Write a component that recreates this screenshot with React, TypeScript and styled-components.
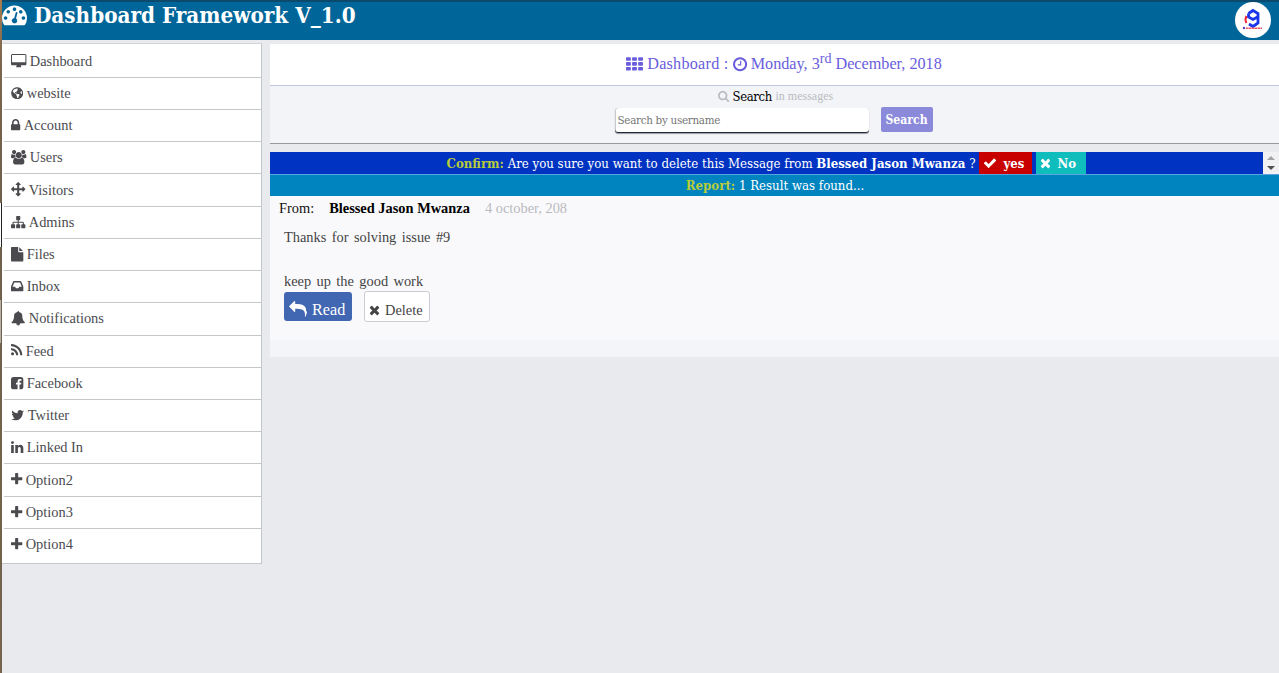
import React from 'react';
import styled, { createGlobalStyle } from 'styled-components';
import { FaGlobeAmericas } from 'react-icons/fa';

const slab = '"DejaVu Serif Condensed", "DejaVu Serif", serif';
const serif = '"Liberation Serif", "Times New Roman", serif';

const GlobalStyle = createGlobalStyle`
  * { box-sizing: border-box; }
  body { margin: 0; background: #e9eaee; font-family: ${serif}; overflow: hidden; }
`;

type Glyph = { x: number; w: number; d: string };

const cell = (x: number, y: number) =>
  `M${x + 512} ${y + 96}v192q0 40-28 68t-68 28h-320q-40 0-68-28t-28-68v-192q0-40 28-68t68-28h320q40 0 68 28t28 68z`;

const glyphs: Record<string, Glyph> = {
  tachometer: { x: 0, w: 1792, d: 'M384 1152q0-53-37.5-90.5t-90.5-37.5-90.5 37.5-37.5 90.5 37.5 90.5 90.5 37.5 90.5-37.5 37.5-90.5zm192-448q0-53-37.5-90.5t-90.5-37.5-90.5 37.5-37.5 90.5 37.5 90.5 90.5 37.5 90.5-37.5 37.5-90.5zm428 481l101-382q6-26-7.5-48.5t-38.5-29.5-48 6.5-30 39.5l-101 382q-60 5-107 43.5t-63 98.5q-20 77 20 146t117 89 146-20 89-117q16-60-6-117t-72-91zm660-33q0-53-37.5-90.5t-90.5-37.5-90.5 37.5-37.5 90.5 37.5 90.5 90.5 37.5 90.5-37.5 37.5-90.5zm-640-640q0-53-37.5-90.5t-90.5-37.5-90.5 37.5-37.5 90.5 37.5 90.5 90.5 37.5 90.5-37.5 37.5-90.5zm448 192q0-53-37.5-90.5t-90.5-37.5-90.5 37.5-37.5 90.5 37.5 90.5 90.5 37.5 90.5-37.5 37.5-90.5zm320 448q0 261-141 483-19 29-54 29h-1402q-35 0-54-29-141-221-141-483 0-182 71-348t191-286 286-191 348-71 348 71 286 191 191 286 71 348z' },
  desktop: { x: -64, w: 1920, d: 'M1728 992v-832q0-13-9.5-22.5t-22.5-9.5h-1600q-13 0-22.5 9.5t-9.5 22.5v832q0 13 9.5 22.5t22.5 9.5h1600q13 0 22.5-9.5t9.5-22.5zm128-832v1088q0 66-47 113t-113 47h-544q0 37 16 77.5t32 71 16 43.5q0 26-19 45t-45 19h-512q-26 0-45-19t-19-45q0-14 16-44t32-70 16-78h-544q-66 0-113-47t-47-113v-1088q0-66 47-113t113-47h1600q66 0 113 47t47 113z' },
  lock: { x: 320, w: 1152, d: 'M640 768h512v-192q0-106-75-181t-181-75-181 75-75 181v192zm832 96v576q0 40-28 68t-68 28h-960q-40 0-68-28t-28-68v-576q0-40 28-68t68-28h32v-192q0-184 132-316t316-132 316 132 132 316v192h32q40 0 68 28t28 68z' },
  users: { x: 0, w: 1920, d: 'M593 896q-162 5-265 128h-134q-82 0-138-40.5t-56-118.5q0-353 124-353 6 0 43.5 21t97.5 42.5 119 21.5q67 0 133-23-5 37-5 66 0 139 81 256zm1071 637q0 120-73 189.5t-194 69.5h-874q-121 0-194-69.5t-73-189.5q0-53 3.5-103.5t14-109 26.5-108.5 43-97.5 62-81 85.5-53.5 111.5-20q10 0 43 21.5t73 48 107 48 135 21.5 135-21.5 107-48 73-48 43-21.5q61 0 111.5 20t85.5 53.5 62 81 43 97.5 26.5 108.5 14 109 3.5 103.5zm-1024-1277q0 106-75 181t-181 75-181-75-75-181 75-181 181-75 181 75 75 181zm704 384q0 159-112.5 271.5t-271.5 112.5-271.5-112.5-112.5-271.5 112.5-271.5 271.5-112.5 271.5 112.5 112.5 271.5zm576 225q0 78-56 118.5t-138 40.5h-134q-103-123-265-128 81-117 81-256 0-29-5-66 66 23 133 23 59 0 119-21.5t97.5-42.5 43.5-21q124 0 124 353zm-128-609q0 106-75 181t-181 75-181-75-75-181 75-181 181-75 181 75 75 181z' },
  arrows: { x: 0, w: 1792, d: 'M1792 896q0 26-19 45l-256 256q-19 19-45 19t-45-19-19-45v-128h-384v384h128q26 0 45 19t19 45-19 45l-256 256q-19 19-45 19t-45-19l-256-256q-19-19-19-45t19-45 45-19h128v-384h-384v128q0 26-19 45t-45 19-45-19l-256-256q-19-19-19-45t19-45l256-256q19-19 45-19t45 19 19 45v128h384v-384h-128q-26 0-45-19t-19-45 19-45l256-256q19-19 45-19t45 19l256 256q19 19 19 45t-19 45-45 19h-128v384h384v-128q0-26 19-45t45-19 45 19l256 256q19 19 19 45z' },
  sitemap: { x: 0, w: 1792, d: 'M1792 1248v320q0 40-28 68t-68 28h-320q-40 0-68-28t-28-68v-320q0-40 28-68t68-28h96v-192h-512v192h96q40 0 68 28t28 68v320q0 40-28 68t-68 28h-320q-40 0-68-28t-28-68v-320q0-40 28-68t68-28h96v-192h-512v192h96q40 0 68 28t28 68v320q0 40-28 68t-68 28h-320q-40 0-68-28t-28-68v-320q0-40 28-68t68-28h96v-192q0-52 38-90t90-38h512v-192h-96q-40 0-68-28t-28-68v-320q0-40 28-68t68-28h320q40 0 68 28t28 68v320q0 40-28 68t-68 28h-96v192h512q52 0 90 38t38 90v192h96q40 0 68 28t28 68z' },
  file: { x: 128, w: 1536, d: 'M1152 512v-472q22 14 36 28l408 408q14 14 28 36h-472zm-128 32q0 40 28 68t68 28h544v1056q0 40-28 68t-68 28h-1344q-40 0-68-28t-28-68v-1600q0-40 28-68t68-28h800v544z' },
  inbox: { x: 128, w: 1536, d: 'M1151 960h316q-1-3-2.5-8t-2.5-8l-212-496h-708l-212 496q-1 2-2.5 8t-2.5 8h316l95 192h320zm513 30v482q0 26-19 45t-45 19h-1408q-26 0-45-19t-19-45v-482q0-62 25-123l238-552q10-25 36.5-42t52.5-17h832q26 0 52.5 17t36.5 42l238 552q25 61 25 123z' },
  bell: { x: 0, w: 1792, d: 'M912 1696q0-16-16-16-59 0-101.5-42.5t-42.5-101.5q0-16-16-16t-16 16q0 73 51.5 124.5t124.5 51.5q16 0 16-16zm816-288q0 52-38 90t-90 38h-448q0 106-75 181t-181 75-181-75-75-181h-448q-52 0-90-38t-38-90q50-42 91-88t85-119.5 74.5-158.5 50-206 19.5-260q0-152 117-282.5t307-158.5q-8-19-8-39 0-40 28-68t68-28 68 28 28 68q0 20-8 39 190 28 307 158.5t117 282.5q0 139 19.5 260t50 206 74.5 158.5 85 119.5 91 88z' },
  rss: { x: 192, w: 1408, d: 'M576 1344q0 80-56 136t-136 56-136-56-56-136 56-136 136-56 136 56 56 136zm512 123q2 28-17 48-18 21-47 21h-135q-25 0-43-16.5t-20-41.5q-22-229-184.5-391.5t-391.5-184.5q-25-2-41.5-20t-16.5-43v-135q0-29 21-47 17-17 43-17h5q160 13 306 80.5t259 181.5q114 113 181.5 259t80.5 306zm512 2q2 27-18 47-18 20-46 20h-143q-26 0-44.5-17.5t-19.5-42.5q-12-215-101-408.5t-231.5-336-336-231.5-408.5-102q-25-1-42.5-19.5t-17.5-43.5v-143q0-28 20-46 18-18 44-18h3q262 13 501.5 120t425.5 294q187 186 294 425.5t120 501.5z' },
  facebook: { x: 128, w: 1536, d: 'M1376 128q119 0 203.5 84.5t84.5 203.5v960q0 119-84.5 203.5t-203.5 84.5h-188v-595h199l30-232h-229v-148q0-56 23.5-84t91.5-28l122-1v-207q-63-9-178-9-136 0-217.5 80t-81.5 226v171h-200v232h200v595h-532q-119 0-203.5-84.5t-84.5-203.5v-960q0-119 84.5-203.5t203.5-84.5h960z' },
  twitter: { x: 64, w: 1664, d: 'M1684 408q-67 98-162 167 1 14 1 42 0 130-38 259.5t-115.5 248.5-184.5 210.5-258 146-323 54.5q-271 0-496-145 35 4 78 4 225 0 401-138-105-2-188-64.5t-114-159.5q33 5 61 5 43 0 85-11-112-23-185.5-111.5t-73.5-205.5v-4q68 38 146 41-66-44-105-115t-39-154q0-88 44-163 121 149 294.5 238.5t371.5 99.5q-8-38-8-74 0-134 94.5-228.5t228.5-94.5q140 0 236 102 109-21 205-78-37 115-142 178 93-10 186-50z' },
  linkedin: { x: 128, w: 1536, d: 'M477 625v991h-330v-991h330zm21-306q1 73-50.5 122t-135.5 49h-2q-82 0-132-49t-50-122q0-74 51.5-122.5t134.5-48.5 133 48.5 51 122.5zm1166 729v568h-329v-530q0-105-40.5-164.5t-126.5-59.5q-63 0-105.5 34.5t-63.5 85.5q-11 30-11 81v553h-329q2-399 2-647t-1-296l-1-48h329v144h-2q20-32 41-56t56.5-52 87-43.5 114.5-15.5q171 0 275 113.5t104 332.5z' },
  plus: { x: 192, w: 1408, d: 'M1600 736v192q0 40-28 68t-68 28h-416v416q0 40-28 68t-68 28h-192q-40 0-68-28t-28-68v-416h-416q-40 0-68-28t-28-68v-192q0-40 28-68t68-28h416v-416q0-40 28-68t68-28h192q40 0 68 28t28 68v416h416q40 0 68 28t28 68z' },
  th: { x: 0, w: 1792, d: [128, 640, 1152].flatMap((y) => [0, 640, 1280].map((x) => cell(x, y))).join('') },
  clock: { x: 128, w: 1536, d: 'M1024 544v448q0 14-9 23t-23 9h-320q-14 0-23-9t-9-23v-64q0-14 9-23t23-9h224v-352q0-14 9-23t23-9h64q14 0 23 9t9 23zm416 352q0-148-73-273t-198-198-273-73-273 73-198 198-73 273 73 273 198 198 273 73 273-73 198-198 73-273zm224 0q0 209-103 385.5t-279.5 279.5-385.5 103-385.5-103-279.5-279.5-103-385.5 103-385.5 279.5-279.5 385.5-103 385.5 103 279.5 279.5 103 385.5z' },
  search: { x: 64, w: 1664, d: 'M1216 832q0-185-131.5-316.5t-316.5-131.5-316.5 131.5-131.5 316.5 131.5 316.5 316.5 131.5 316.5-131.5 131.5-316.5zm512 832q0 52-38 90t-90 38q-54 0-90-38l-343-342q-179 124-399 124-143 0-273.5-55.5t-225-150-150-225-55.5-273.5 55.5-273.5 150-225 225-150 273.5-55.5 273.5 55.5 225 150 150 225 55.5 273.5q0 220-124 399l343 343q37 37 37 90z' },
  check: { x: 0, w: 1792, d: 'M1671 566q0 40-28 68l-724 724-136 136q-28 28-68 28t-68-28l-136-136-362-362q-28-28-28-68t28-68l136-136q28-28 68-28t68 28l294 295 656-657q28-28 68-28t68 28l136 136q28 28 28 68z' },
  times: { x: 192, w: 1408, d: 'M1490 1322q0 40-28 68l-136 136q-28 28-68 28t-68-28l-294-294-294 294q-28 28-68 28t-68-28l-136-136q-28-28-28-68t28-68l294-294-294-294q-28-28-28-68t28-68l136-136q28-28 68-28t68 28l294 294 294-294q28-28 68-28t68 28l136 136q28 28 28 68t-28 68l-294 294 294 294q28 28 28 68z' },
  reply: { x: 0, w: 1792, d: 'M1792 1120q0 166-127 451-3 7-10.5 24t-13.5 30-13 22q-12 17-28 17-15 0-23.5-10t-8.5-25q0-9 2.5-26.5t2.5-23.5q5-68 5-123 0-112-19.5-200.5t-54-153.5-89-112-117-79.5-149.5-49-174-25.5-202-8h-224v256q0 26-19 45t-45 19-45-19l-512-512q-19-19-19-45t19-45l512-512q19-19 45-19t45 19 19 45v256h224q713 0 875 403 53 134 53 333z' },
};

const Svg = styled.svg`
  display: inline-block;
  fill: currentColor;
  flex: none;
  overflow: visible;
`;

const Icon = ({ name, size }: { name: string; size: number }) => {
  if (name === 'globe') return <FaGlobeAmericas size={size * 0.86} />;
  const g = glyphs[name];
  return (
    <Svg width={(size * g.w) / 1792} height={size} viewBox={`${g.x} 0 ${g.w} 1792`}>
      <path d={g.d} />
    </Svg>
  );
};

/* The narrow strip on the left edge shows the desktop behind the window. */
const Page = styled.div`
  height: 673px;
  padding-left: 2px;
  background:
    linear-gradient(#fff, #fff) 0 203px / 1px 44px no-repeat,
    linear-gradient(#222, #222) 1px 203px / 1px 44px no-repeat,
    linear-gradient(#b5b0a8, #b5b0a8) 0 300px / 1px 43px no-repeat,
    linear-gradient(#a87c4e, #7c6650 60px, #6f604c 200px, #75654d) 0 0 / 2px 100% no-repeat;
`;

const Header = styled.header`
  display: flex;
  justify-content: space-between;
  height: 40px;
  border-top: 2px solid #0b4a6c;
  background: #006699;
  color: #fff;
`;

const Title = styled.h1`
  display: flex;
  align-items: flex-start;
  gap: 7px;
  height: 26px;
  margin: 0;
  font: bold 22.25px/26px ${slab};
  white-space: nowrap;
`;

const Avatar = styled.div`
  width: 36px;
  height: 36px;
  margin-right: 8px;
  border-radius: 50%;
  background: #fff;
`;

const Columns = styled.div`
  display: flex;
  align-items: flex-start;
  gap: 8px;
  padding-top: 3px;
`;

const Sidebar = styled.nav`
  width: 260px;
  height: 521px;
  padding: 1.6px 0 0 2px;
  background: #fff;
  border-top: 1px solid #d2d5d8;
  border-right: 1px solid #c3c7cc;
  border-bottom: 1px solid #c3c7cc;
`;

const NavItem = styled.a`
  display: flex;
  align-items: center;
  gap: 3.4px;
  height: 32.22px;
  padding-left: 7px;
  border-bottom: 1px solid #c4c8cb;
  color: #4b4b4f;
  font-size: 14.4px;
  white-space: nowrap;
  svg { margin-bottom: 1px; }
  &:last-child { border-bottom: 0; }
`;

const Main = styled.main`
  flex: 1;
  min-width: 0;
  padding-top: 1px;
`;

const DateBar = styled.div`
  display: flex;
  justify-content: center;
  align-items: center;
  gap: 4px;
  height: 42px;
  padding-left: 19px;
  background: #fff;
  border-bottom: 1px solid #c3c5e4;
  color: #6a5ddc;
  font-size: 16.2px;
  white-space: pre;
  sup { font-size: 14px; line-height: 0; }
`;

const Crumb = styled.span`
  letter-spacing: 0.24px;
`;

const SearchArea = styled.form`
  height: 58px;
  background: #f3f4f7;
  border-bottom: 1px solid #999;
`;

const SearchLabel = styled.div`
  display: flex;
  justify-content: center;
  align-items: center;
  gap: 3.5px;
  height: 20px;
  padding-left: 2px;
  color: #b9bcc0;
  font-size: 12px;
  b { font: 13px ${slab}; letter-spacing: -0.35px; color: #000; }
`;

const SearchRow = styled.div`
  display: flex;
  justify-content: center;
  align-items: flex-start;
  gap: 12px;
  padding: 1px 2px 0 0;
`;

const Field = styled.input`
  width: 254px;
  height: 25px;
  margin-top: 1px;
  padding: 0 2px 1px 3px;
  border: 0;
  border-radius: 3px;
  background: #fff;
  box-shadow: inset 0 -1px 0 #222a38, 0 1px 1px #9a9da5, inset 1px 0 0 #c8cad0;
  font: 11.5px ${slab};
  letter-spacing: -0.28px;
  &::placeholder { color: #757575; opacity: 1; }
`;

const SearchButton = styled.button`
  width: 52px;
  height: 25px;
  padding: 0;
  border: 0;
  border-radius: 2px;
  background: #8b89da;
  color: #fff;
  font: bold 12.1px ${slab};
`;

const ConfirmRow = styled.div`
  display: flex;
  height: 23px;
  margin-top: 8px;
  border-bottom: 1px solid #58a4e0;
`;

const Confirm = styled.div`
  display: flex;
  flex: 1;
  justify-content: center;
  align-items: center;
  background: #0033c2;
  color: #fff;
  font: 13.1px ${slab};
  white-space: pre;
`;

const Caption = styled.b`
  color: #b9cc3a;
`;

const Answer = styled.button<{ $bg: string; $w: number }>`
  display: flex;
  align-items: center;
  gap: 6px;
  width: ${(p) => p.$w}px;
  height: 22px;
  margin-left: 4px;
  padding: 0 4px;
  border: 0;
  background: ${(p) => p.$bg};
  color: #fff;
  font: bold 13px ${slab};
`;

const Stepper = styled.div`
  display: flex;
  flex-direction: column;
  align-items: center;
  justify-content: center;
  gap: 6px;
  width: 16px;
  background: #f1f1f3;
`;

const Arrow = styled.i<{ $up?: boolean }>`
  border: 4px solid transparent;
  border-top-width: ${(p) => (p.$up ? 0 : 4)}px;
  border-bottom-width: ${(p) => (p.$up ? 4 : 0)}px;
  border-top-color: #505050;
  border-bottom-color: #a3a3a3;
`;

const Report = styled.div`
  display: flex;
  justify-content: center;
  align-items: center;
  height: 21px;
  padding-left: 1px;
  background: #0084c0;
  color: #fff;
  font: 13.1px ${slab};
  white-space: pre;
`;

const Message = styled.article`
  height: 161px;
  padding: 4px 9px 0;
  background: #f9f9fc;
  border-bottom: 17px solid #f4f5f8;
`;

const From = styled.div`
  display: flex;
  gap: 15px;
  font-size: 14.4px;
  line-height: 17px;
  color: #111;
  b { color: #000; }
  time { color: #b9b9bd; }
`;

const Body = styled.p`
  margin: 9px 0 0 5px;
  font-size: 14.4px;
  line-height: 22px;
  word-spacing: 1.8px;
  color: #444;
  white-space: pre;
`;

const Actions = styled.div`
  display: flex;
  gap: 12px;
  padding-left: 5px;
`;

const Action = styled.button<{ $primary?: boolean }>`
  display: flex;
  align-items: center;
  gap: 5px;
  width: ${(p) => (p.$primary ? 68 : 66)}px;
  height: ${(p) => (p.$primary ? 29 : 31)}px;
  margin-top: ${(p) => (p.$primary ? 0 : -1)}px;
  padding: 8px 0 0 ${(p) => (p.$primary ? 6 : 4)}px;
  border: ${(p) => (p.$primary ? '0' : '1px solid #ccccd2')};
  border-radius: 3px;
  background: ${(p) => (p.$primary ? '#4267b2' : '#fff')};
  color: ${(p) => (p.$primary ? '#fff' : '#444')};
  font: ${(p) => (p.$primary ? 16.2 : 14.4)}px ${serif};
  svg { margin-bottom: 2px; }
`;

const items: [string, string][] = [
  ['desktop', 'Dashboard'], ['globe', 'website'], ['lock', 'Account'], ['users', 'Users'],
  ['arrows', 'Visitors'], ['sitemap', 'Admins'], ['file', 'Files'], ['inbox', 'Inbox'],
  ['bell', 'Notifications'], ['rss', 'Feed'], ['facebook', 'Facebook'], ['twitter', 'Twitter'],
  ['linkedin', 'Linked In'], ['plus', 'Option2'], ['plus', 'Option3'], ['plus', 'Option4'],
];

const Logo = () => (
  <svg width="36" height="36" viewBox="0 0 36 36">
    <path d="M13.5 11.500l4.500-3 5 3v9.500l-5 3.500-4-2.500M13.500 11.500v3.500l4.500 2.500 4.500-2.500" fill="none" stroke="#1b35ea" strokeWidth="2.8" />
    <path d="M11.500 14q-2 3.500 0 7" fill="none" stroke="#ef2433" strokeWidth="2" />
    <circle cx="9" cy="26" r="1.200" fill="#5a3bb8" />
    <path d="M11 26.200h16" stroke="#ea5a68" strokeWidth="1.600" strokeDasharray="2.500 .4" />
  </svg>
);

export default function App() {
  return (
    <Page>
      <GlobalStyle />
      <Header>
        <Title><Icon name="tachometer" size={25} />Dashboard Framework V_1.0</Title>
        <Avatar><Logo /></Avatar>
      </Header>
      <Columns>
        <Sidebar>
          {items.map(([icon, label]) => (
            <NavItem key={label}><Icon name={icon} size={14.4} />{label}</NavItem>
          ))}
        </Sidebar>
        <Main>
          <DateBar>
            <Icon name="th" size={17} />
            <Crumb>Dashboard :</Crumb>
            <Icon name="clock" size={16.5} />
            <span>Monday, 3<sup>rd</sup> December, 2018</span>
          </DateBar>
          <SearchArea>
            <SearchLabel><Icon name="search" size={12} /><b>Search</b>in messages</SearchLabel>
            <SearchRow>
              <Field placeholder="Search by username" />
              <SearchButton type="button">Search</SearchButton>
            </SearchRow>
          </SearchArea>
          <ConfirmRow>
            <Confirm>
              <Caption>Confirm:</Caption> Are you sure you want to delete this Message from <b>Blessed Jason Mwanza</b> ?
              <Answer $bg="#c80000" $w={53}><Icon name="check" size={14} />yes</Answer>
              <Answer $bg="#10bdbd" $w={50}><Icon name="times" size={14} />No</Answer>
            </Confirm>
            <Stepper><Arrow $up /><Arrow /></Stepper>
          </ConfirmRow>
          <Report><Caption>Report:</Caption> 1 Result was found...</Report>
          <Message>
            <From><span>From:</span><b>Blessed Jason Mwanza</b><time>4 october, 208</time></From>
            <Body>{'Thanks for solving issue #9\n\nkeep up the good work'}</Body>
            <Actions>
              <Action $primary><Icon name="reply" size={17} />Read</Action>
              <Action><Icon name="times" size={14} />Delete</Action>
            </Actions>
          </Message>
        </Main>
      </Columns>
    </Page>
  );
}
